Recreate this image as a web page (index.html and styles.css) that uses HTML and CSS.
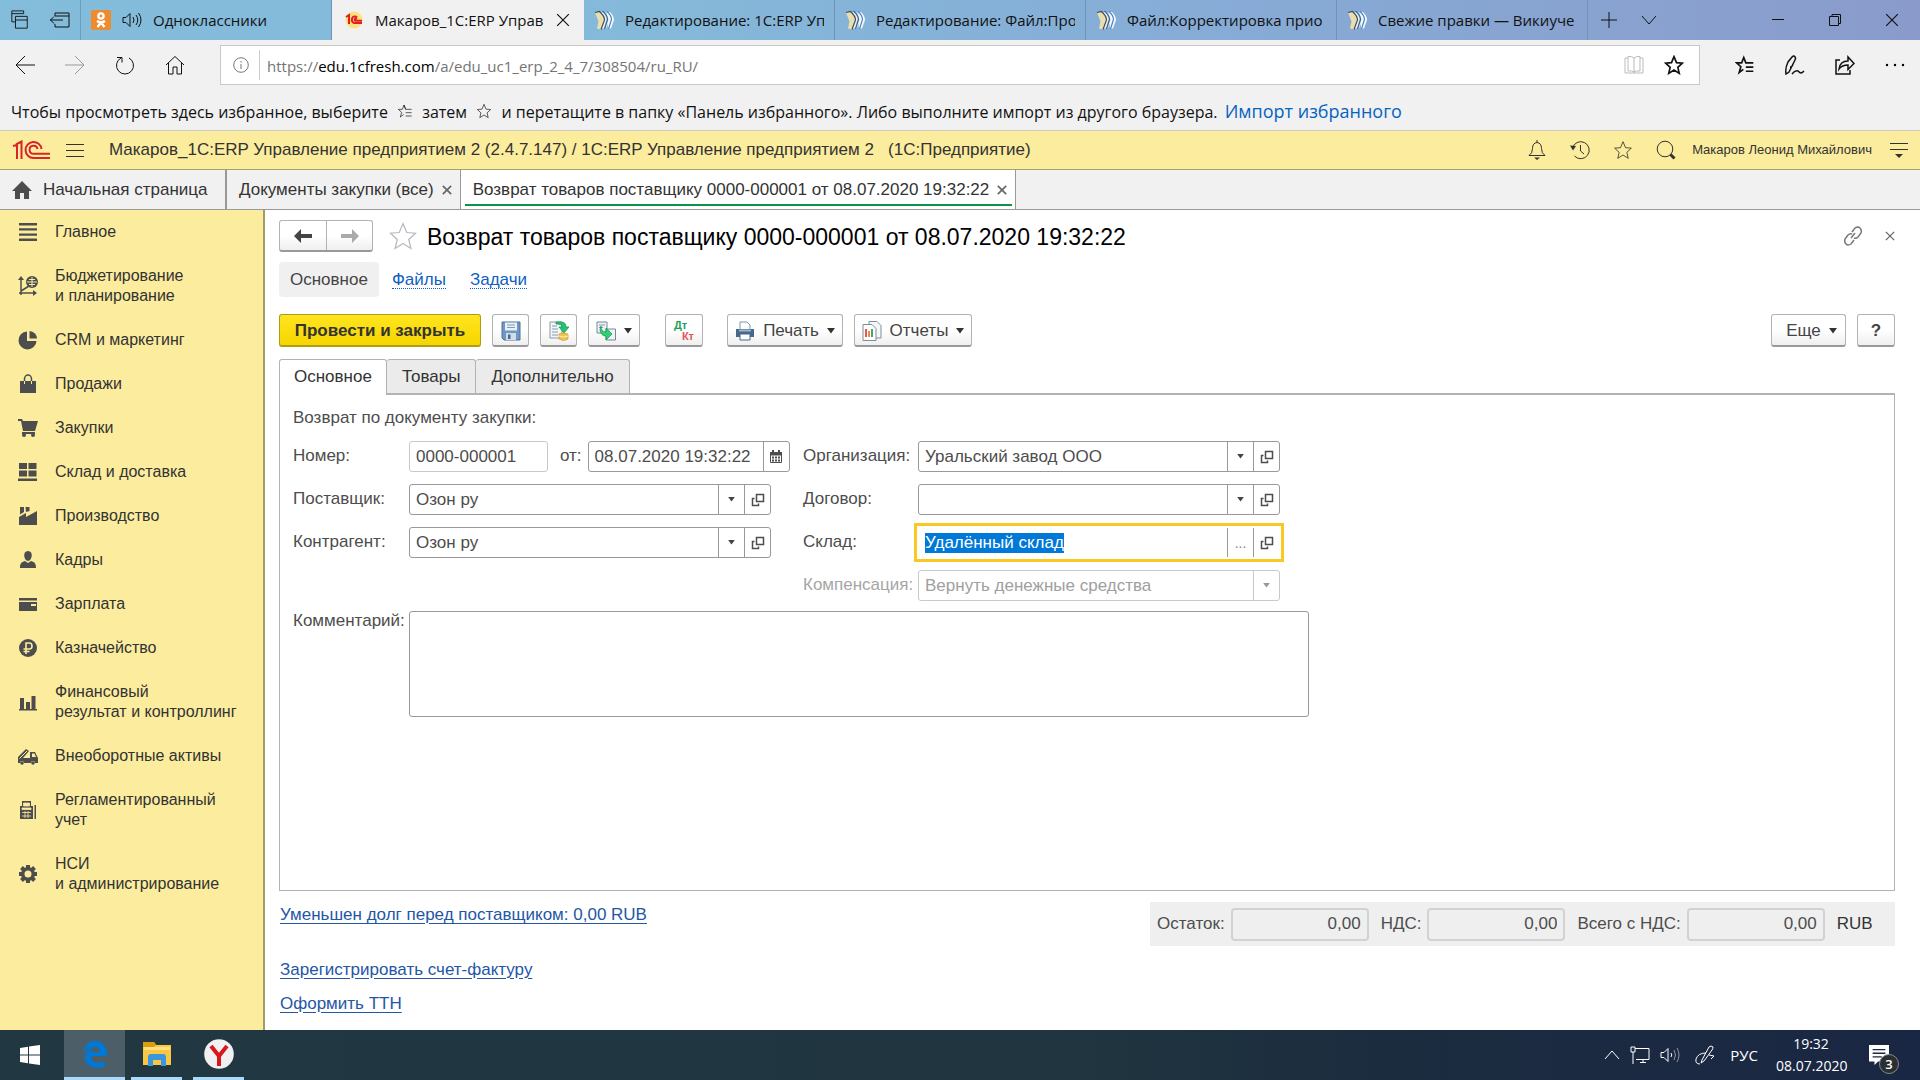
FILE: index.html
```html
<!DOCTYPE html>
<html lang="ru">
<head>
<meta charset="utf-8">
<title>Макаров_1С:ERP Управление предприятием 2</title>
<link rel="stylesheet" href="styles.css">
</head>
<body>
<svg class="defs" aria-hidden="true">
  <symbol id="star" viewBox="0 0 24 24"><path d="M12 2l3 7.2 7 .6-5.400 5 1.700 7.200L12 18l-6.300 4 1.700-7.200L2 9.800l7-.6z"/></symbol>
  <symbol id="books" viewBox="0 0 20 20"><path d="M12.500 2h3.500q4 4 4 8l-3 8.500h-3z" fill="#f4f8fc"/><path d="M13 1.500q4.500 4 4.500 8l-3 9.500" fill="none" stroke="#4b84c4" stroke-width="1.200"/><path d="M7.500 2h3.500q4 4 4 8l-3 8.500H8z" fill="#f2efe6"/><path d="M8.500 1q5 4.500 5 8.500l-3 9.500" fill="none" stroke="#356ba6" stroke-width="1.400"/><path d="M1 2.500L5.500 2q4.500 4.500 4.500 8l-3 9.500-4-1 1.500-7z" fill="#e9dfae"/><path d="M1 2.500L5.500 1.500q5 4.500 5 8.500L7 19.500" fill="none" stroke="#3f4d59" stroke-width="1.200"/></symbol>
  <symbol id="open" viewBox="0 0 14 14"><path d="M5.500 1.500h7v7h-7zM3.500 5.500h-2v7h6v-2" fill="none" stroke="#4d4d4d" stroke-width="1.500"/></symbol>
  <symbol id="arrow" viewBox="0 0 8 6"><path d="M0 0h8L4 5.500z"/></symbol>
  <symbol id="cross" viewBox="0 0 12 12"><path d="M1 1l10 10M11 1L1 11"/></symbol>
  <symbol id="favs" viewBox="0 0 24 24"><path d="M13 9.500L10.500 3 8 9.500H2l5 4.500-2 7 5-3.800M10.500 3l2.500 6.500h9M13 14.500h9M13 19.500h9"/></symbol>
</svg>

<header class="browser">
  <div class="tabs">
    <div class="tab-tools">
      <svg class="line i20" viewBox="0 0 20 22"><path d="M1 1h13v3H1zM1 4v9h4M5 7h13v4H5zM5 11v9h13v-9"/></svg>
      <svg class="line i20" viewBox="0 0 20 20"><path d="M5 6V3h14v14H5v-3M5 6h14M0 10h13M4 6.500L.5 10 4 13.500"/></svg>
    </div>
    <div class="tab">
      <svg class="i20" viewBox="0 0 20 20"><rect width="20" height="20" rx="2" fill="#ee8b2e"/><g fill="none" stroke="#fff" stroke-width="2.400"><circle cx="10" cy="6" r="2.600"/><path d="M6 11q4 2.600 8 0M10 12.500L6.500 17M10 12.500l3.500 4.500"/></g></svg>
      <svg class="line i20" viewBox="0 0 20 20"><path d="M1 7.500h3l4-4v13l-4-4H1zM11 7q2 3 0 6M14 5q3.500 5 0 10M16.500 3q5 7 0 14"/></svg>
      <span>Одноклассники</span>
    </div>
    <div class="tab active">
      <svg class="i20" viewBox="0 0 20 20"><circle cx="10" cy="10" r="8.500" fill="#fbe27c"/><path d="M2 7l3-2v9M13 7.500a3 3.300 0 1 0-1.500 5.500H18M12.500 9.500a1 1 0 1 0-1 1.300H18" fill="none" stroke="#e31e24" stroke-width="2"/></svg>
      <span>Макаров_1С:ERP Управ</span>
      <button aria-label="Закрыть вкладку"><svg class="line i14"><use href="#cross"/></svg></button>
    </div>
    <div class="tab"><svg class="i20"><use href="#books"/></svg><span>Редактирование: 1С:ERP Уп</span></div>
    <div class="tab"><svg class="i20"><use href="#books"/></svg><span>Редактирование: Файл:Про</span></div>
    <div class="tab"><svg class="i20"><use href="#books"/></svg><span>Файл:Корректировка прио</span></div>
    <div class="tab"><svg class="i20"><use href="#books"/></svg><span>Свежие правки — Викиуче</span></div>
    <div class="tab-more">
      <svg class="line i16" viewBox="0 0 16 16"><path d="M8 0v16M0 8h16"/></svg>
      <svg class="line i16" viewBox="0 0 16 16"><path d="M1 4l7 8 7-8"/></svg>
    </div>
    <div class="window-buttons">
      <button aria-label="Свернуть"><svg class="line i14" viewBox="0 0 14 14"><path d="M1 6.500h12"/></svg></button>
      <button aria-label="Развернуть"><svg class="line i14" viewBox="0 0 14 14"><path d="M1.500 3.500h9v9h-9zM4 3.500v-2h8.500v9h-2"/></svg></button>
      <button aria-label="Закрыть"><svg class="line i14"><use href="#cross"/></svg></button>
    </div>
  </div>

  <div class="address">
    <div class="nav">
      <svg class="line" viewBox="0 0 20 20"><path d="M20 10H1M10 1l-9 9 9 9"/></svg>
      <svg class="line dim" viewBox="0 0 20 20"><path d="M0 10h19M10 1l9 9-9 9"/></svg>
      <svg class="line" viewBox="0 0 20 20"><path d="M6 3a8.500 8.500 0 1 0 8 0M2 2.500h5v5"/></svg>
      <svg class="line" viewBox="0 0 20 20"><path d="M1 10l9-8.500 9 8.500M3.500 8v11h4.500v-7h4v7h4.500V8"/></svg>
    </div>
    <div class="url">
      <svg class="line i16 grey" viewBox="0 0 16 16"><circle cx="8" cy="8" r="7.300"/><path d="M8 7v5M8 4v1.500"/></svg>
      <i></i>
      <a href="#">https://<b>edu.1cfresh.com</b>/a/edu_uc1_erp_2_4_7/308504/ru_RU/</a>
      <svg class="line i20 pale" viewBox="0 0 20 20"><path d="M10 3v15M10 3Q8 1 4 1.500V16q4-.5 6 1 2-1.500 6-1V1.500Q12 1 10 3M4 3H1v15h18V3h-3"/></svg>
      <svg class="line i20 bold"><use href="#star"/></svg>
    </div>
    <div class="actions">
      <svg class="line bold"><use href="#favs"/></svg>
      <svg class="line medium" viewBox="0 0 20 20"><path d="M1 19q-1-6 2-12L7 2q2-2 3 0 1 1 0 3L4 17zM5 12q2 0 3-2M7 19q3-4 6-3 2 2 3 2t3-2"/></svg>
      <svg class="line medium" viewBox="0 0 20 20"><path d="M5 5H1v14h14v-4M4 14q1-8 9-8V2l6 6.500-6 6V10q-6 0-9 4z"/></svg>
      <svg viewBox="0 0 20 20"><circle cx="2" cy="10" r="1.200"/><circle cx="10" cy="10" r="1.200"/><circle cx="18" cy="10" r="1.200"/></svg>
    </div>
  </div>
  <p class="favbar">Чтобы просмотреть здесь избранное, выберите <svg class="line i16"><use href="#favs"/></svg> затем <svg class="line i16"><use href="#star"/></svg> и перетащите в папку «Панель избранного». Либо выполните импорт из другого браузера. <a href="#">Импорт избранного</a></p>
</header>

<div class="app-bar">
  <svg class="logo" viewBox="0 0 38 20"><g fill="none" stroke="#d8232a" stroke-width="2"><path d="M1 6l4-1M5 19V5M9.500 19V1.500L4 4.500"/><path d="M29.500 9a8 8 0 1 0-8 9H38M25.500 9a4 4 0 1 0-4 4.800H38"/></g></svg>
  <svg class="line menu" viewBox="0 0 18 14"><path d="M0 1.500h18M0 7.500h18M0 13.500h18"/></svg>
  <span class="app-name">Макаров_1С:ERP Управление предприятием 2 (2.4.7.147) / 1С:ERP Управление предприятием 2 &nbsp; (1С:Предприятие)</span>
  <div class="app-icons">
    <svg class="line" viewBox="0 0 20 20"><path d="M2 15.500q3.500-2 3.500-7Q5.500 3 10 2.500q4.500.500 4.500 6 0 5 3.500 7zM10 0v2.500"/><path d="M7 17.500h6l-3 2.500z" fill="#333" stroke="none"/></svg>
    <svg class="line" viewBox="0 0 20 20"><path d="M2.500 8a8.500 8.500 0 1 1 2 8M10.500 5v6l3.500 3"/><path d="M0 5.500l6 .5-3 4.500z" fill="#333" stroke="none"/></svg>
    <svg class="line"><use href="#star"/></svg>
    <svg class="line" viewBox="0 0 20 20"><circle cx="9" cy="9" r="7.800"/><path d="M14.500 14.500l4 4" stroke-width="3"/></svg>
  </div>
  <span class="user">Макаров Леонид Михайлович</span>
  <svg class="line menu" viewBox="0 0 18 18"><path d="M0 2.500h18M0 8.500h18"/><path d="M5 13h8l-4 4z" fill="#333" stroke="none"/></svg>
</div>

<nav class="app-tabs">
  <a href="#" class="home"><svg class="i20" viewBox="0 0 20 20"><path d="M10 1L0 11h3v8h5v-6h4v6h5v-8h3z"/></svg>Начальная страница</a>
  <a href="#" class="doc">Документы закупки (все)<svg class="x"><use href="#cross"/></svg></a>
  <a href="#" class="doc current">Возврат товаров поставщику 0000-000001 от 08.07.2020 19:32:22<svg class="x"><use href="#cross"/></svg></a>
</nav>

<div class="workspace">
  <nav class="sections">
    <a href="#"><svg viewBox="0 0 20 20"><path d="M1 1h18v2.400H1zM1 6.200h18v2.400H1zM1 11.400h18v2.400H1zM1 16.600h18V19H1z"/></svg>Главное</a>
    <a href="#"><svg viewBox="0 0 20 20"><path d="M3 2v17M1 17h17M3 15l8-5" fill="none" stroke="#4d4d4d" stroke-width="1.500"/><path d="M0 4l3-4 3 4zM15 14l4 3-4 3z"/><circle cx="14" cy="6" r="6"/><path d="M14 1v10M9 6h10M11 3.500h6M11 8.500h6" stroke="#fbec9e"/></svg>Бюджетирование<br>и планирование</a>
    <a href="#"><svg viewBox="0 0 20 20"><path d="M9 1.500V11h9.500A9 9 0 1 1 9 1.500z"/><path d="M11.500 1a8 8 0 0 1 7.500 7.500h-7.500z"/></svg>CRM и маркетинг</a>
    <a href="#"><svg viewBox="0 0 20 20"><path d="M2 7h16v12H2z"/><path d="M6.500 10V5a3.500 4 0 0 1 7 0v5" fill="none" stroke="#4d4d4d" stroke-width="1.500"/><path d="M6.500 7v3M13.500 7v3" stroke="#fbec9e"/></svg>Продажи</a>
    <a href="#"><svg viewBox="0 0 20 20"><path d="M0 1h4l1 2h15l-3 10H5L3 3H0z"/><path d="M4 14h13v2H4z"/><circle cx="6" cy="17" r="2"/><circle cx="15" cy="17" r="2"/></svg>Закупки</a>
    <a href="#"><svg viewBox="0 0 20 20"><path d="M1 1h8v6H1zM10.500 1h8v6h-8zM1 8.500h8v6H1zM10.500 8.500h8v6h-8zM0 16.500h19V19H0z"/></svg>Склад и доставка</a>
    <a href="#"><svg viewBox="0 0 20 20"><path d="M1 19v-8l7-4v4l11-6v14zM2 1h4v5l-4 2.500zM7.500 1h4v4L8 6z"/></svg>Производство</a>
    <a href="#"><svg viewBox="0 0 20 20"><path d="M10 1c6 0 4 10 0 10S4 1 10 1zM7 11l3 2 3-2c4 1 5 3 5 7H2c0-4 1-6 5-7z"/></svg>Кадры</a>
    <a href="#"><svg viewBox="0 0 20 20"><path d="M1 4h18v2.500H1z"/><path d="M1 8h18v9H1zM13 10v2h5v-2z" fill-rule="evenodd"/></svg>Зарплата</a>
    <a href="#"><svg viewBox="0 0 20 20"><circle cx="10" cy="10" r="9"/><path d="M8 16V5h3.500q2.500 0 2.500 3t-2.500 3H5.500M5.500 13.500h6" fill="none" stroke="#fbec9e" stroke-width="1.600"/></svg>Казначейство</a>
    <a href="#"><svg viewBox="0 0 20 20"><path d="M1 17h18v1.500H1zM2 6h4v11H2zM8 10h4v7H8zM13.500 4h4v13h-4z"/></svg>Финансовый<br>результат и контроллинг</a>
    <a href="#"><svg viewBox="0 0 20 20"><path d="M0 11L8 3l3 2-6 7h7V6h5l3 6v5h-3a2 2 0 0 0-4 0H6a2 2 0 0 0-4 0H0zM14 7.500V11h4l-1.500-3.500z" fill-rule="evenodd"/><path d="M1.500 12.500L9 5" stroke="#fbec9e"/><circle cx="4" cy="17" r="1.800"/><circle cx="15" cy="17" r="1.800"/></svg>Внеоборотные активы</a>
    <a href="#"><svg viewBox="0 0 20 20"><path d="M4 1h9v5H4zM2 6h13v13H2zM16.500 5H18v14h-1.500z"/><path d="M5.500 3h6v3h-6zM4 8h9v1.500H4zM4 12.500h9M4 16h9M7 11v7M10 11v7" fill="#fbec9e" stroke="#fbec9e" stroke-width=".8"/></svg>Регламентированный<br>учет</a>
    <a href="#"><svg viewBox="0 0 20 20"><path d="M10 1v18M1 10h18M3.500 3.500l13 13M16.500 3.500l-13 13" stroke="#4d4d4d" stroke-width="4"/><circle cx="10" cy="10" r="7"/><circle cx="10" cy="10" r="3.500" fill="#fbec9e"/></svg>НСИ<br>и администрирование</a>
  </nav>

  <main>
    <div class="title-row">
      <div class="history">
        <button aria-label="Назад"><svg class="i18" viewBox="0 0 18 14"><path d="M7 0v5h11v4H7v5L0 7z"/></svg></button>
        <button aria-label="Вперед" disabled><svg class="i18" viewBox="0 0 18 14"><path d="M11 0v5H0v4h11v5l7-7z"/></svg></button>
      </div>
      <svg class="line fav"><use href="#star"/></svg>
      <h1>Возврат товаров поставщику 0000-000001 от 08.07.2020 19:32:22</h1>
      <div class="title-tools">
        <svg class="line i20" viewBox="0 0 20 20"><path d="M8 12l4-5M9 6l3-4q3-2 5 0t1 5l-3 4q-2 2-4 1M11 14l-3 4q-3 2-5 0t-1-5l3-4q2-2 4-1" stroke-width="1.500"/></svg>
        <svg class="line x"><use href="#cross"/></svg>
      </div>
    </div>

    <nav class="subnav"><span>Основное</span><a href="#">Файлы</a><a href="#">Задачи</a></nav>

    <div class="toolbar">
      <button class="primary">Провести и закрыть</button>
      <button class="sq" aria-label="Записать"><svg class="i20" viewBox="0 0 20 20"><path d="M1 1h18v18H3l-2-2z" fill="#6f98c4" stroke="#4a7099"/><path d="M4 1.500h12v8H4z" fill="#e8f1f8"/><path d="M6 4h8M6 6.500h8" stroke="#7f9bb5"/><path d="M5 12h10v7H5z" fill="#d3dde6"/><path d="M7 13.500h2.500V18H7z" fill="#44688f"/></svg></button>
      <button class="sq" aria-label="Провести"><svg class="i20" viewBox="0 0 20 20"><path d="M1 1h12v16H1z" fill="#f4f7fa" stroke="#8799aa"/><path d="M3 5h5M3 8h6M3 11h6M3 14h6" stroke="#8799aa"/><path d="M7 1h5q5 0 5 5h3l-5 6-5-6h3q0-3-6-3z" fill="#26c274" stroke="#149150" stroke-width=".7"/><path d="M10 13q4.500-2 9 0v5q-4.500 3-9 0z" fill="#f0c34c" stroke="#cf9d27" stroke-width=".7"/><path d="M10 15q4.500 2 9 0" fill="none" stroke="#fff0b8"/></svg></button>
      <button class="drop" aria-label="Создать на основании"><svg class="i20" viewBox="0 0 20 20"><path d="M1 1h10v11H1z" fill="#eef2f5" stroke="#75899c"/><path d="M10 8h9.500v11H10z" fill="#eef2f5" stroke="#75899c"/><path d="M3 4h6M3 6.500h4" stroke="#8799aa"/><path d="M5 5q0 6 5 6V7l6 6-6 6v-4Q5 15 4 9z" fill="#33cf74" stroke="#149150" stroke-width=".7"/></svg><svg class="arrow"><use href="#arrow"/></svg></button>
      <button class="sq dtkt"><span>Дт</span><span>Кт</span></button>
      <button class="wide print"><svg class="i20" viewBox="0 0 20 20"><path d="M5 9V1h7l3 3v5" fill="#fff" stroke="#8294a5"/><path d="M1 8h18v8H1z" fill="#47688c"/><path d="M4 9.500h12" stroke="#9fb8d0" stroke-width="2"/><path d="M5 13h10v6H5z" fill="#fff" stroke="#47688c"/></svg>Печать<svg class="arrow"><use href="#arrow"/></svg></button>
      <button class="wide"><svg class="i20" viewBox="0 0 20 20"><path d="M7 .5h8l4 4V17H7z" fill="#f4f7f6" stroke="#7c8f9a"/><path d="M1 3.500h9l4 4v12H1z" fill="#fff" stroke="#7c8f9a"/><path d="M4 8v8" stroke="#e4574d" stroke-width="2"/><path d="M7 10v6" stroke="#e98a4d" stroke-width="2"/><path d="M10 8v8" stroke="#46a862" stroke-width="2"/></svg>Отчеты<svg class="arrow"><use href="#arrow"/></svg></button>
      <span class="spacer"></span>
      <button class="more">Еще<svg class="arrow"><use href="#arrow"/></svg></button>
      <button class="sq help">?</button>
    </div>

    <div class="page-tabs" role="tablist">
      <button role="tab" aria-selected="true">Основное</button><button role="tab">Товары</button><button role="tab">Дополнительно</button>
    </div>
    <form class="panel" onsubmit="return false">
      <p>Возврат по документу закупки:</p>
      <div class="grid">
        <label for="num">Номер:</label>
        <div class="pair">
          <div class="field faded num"><input id="num" value="0000-000001" readonly></div>
          <label for="date">от:</label>
          <div class="field date"><input id="date" value="08.07.2020 19:32:22"><button aria-label="Календарь"><svg class="i12" viewBox="0 0 12 13"><path d="M.5 2.500h11v10H.5z" fill="#fff" stroke="#4d4d4d"/><path d="M0 2h12v3.500H0z" fill="#4d4d4d"/><path d="M3 0v3M9 0v3" stroke="#4d4d4d" stroke-width="2"/><path d="M2 7.500h8M2 10.500h8" stroke="#4d4d4d" stroke-width="2" stroke-dasharray="2 1"/></svg></button></div>
        </div>
        <label for="org">Организация:</label>
        <div class="field"><input id="org" value="Уральский завод ООО"><button aria-label="Выбрать"><svg class="arrow"><use href="#arrow"/></svg></button><button aria-label="Открыть"><svg class="i14"><use href="#open"/></svg></button></div>

        <label for="sup">Поставщик:</label>
        <div class="field"><input id="sup" value="Озон ру"><button aria-label="Выбрать"><svg class="arrow"><use href="#arrow"/></svg></button><button aria-label="Открыть"><svg class="i14"><use href="#open"/></svg></button></div>
        <label for="contract">Договор:</label>
        <div class="field"><input id="contract"><button aria-label="Выбрать"><svg class="arrow"><use href="#arrow"/></svg></button><button aria-label="Открыть"><svg class="i14"><use href="#open"/></svg></button></div>

        <label for="party">Контрагент:</label>
        <div class="field"><input id="party" value="Озон ру"><button aria-label="Выбрать"><svg class="arrow"><use href="#arrow"/></svg></button><button aria-label="Открыть"><svg class="i14"><use href="#open"/></svg></button></div>
        <label for="store">Склад:</label>
        <div class="field focused"><input id="store" value="Удалённый склад"><button class="dots" aria-label="Показать все">...</button><button aria-label="Открыть"><svg class="i14"><use href="#open"/></svg></button></div>

        <label for="comp" class="off comp">Компенсация:</label>
        <div class="field faded"><select id="comp" disabled><option>Вернуть денежные средства</option></select><span class="select-arrow"><svg class="arrow"><use href="#arrow"/></svg></span></div>
      </div>
      <div class="comment">
        <label for="note">Комментарий:</label>
        <textarea id="note"></textarea>
      </div>
    </form>

    <footer>
      <div class="links">
        <a href="#">Уменьшен долг перед поставщиком: 0,00 RUB</a>
        <a href="#">Зарегистрировать счет-фактуру</a>
        <a href="#">Оформить ТТН</a>
      </div>
      <div class="totals">
        <label for="rest">Остаток:</label><input id="rest" value="0,00" readonly>
        <label for="vat">НДС:</label><input id="vat" value="0,00" readonly>
        <label for="total">Всего с НДС:</label><input id="total" value="0,00" readonly>
        <span>RUB</span>
      </div>
    </footer>
  </main>
</div>

<div class="taskbar">
  <button class="start" aria-label="Пуск"><svg class="i20" viewBox="0 0 20 20"><path d="M0 3l8-1.200v7.700H0zM9 1.600L20 0v9.500H9zM0 10.500h8v7.700L0 17zM9 10.500h11V20L9 18.400z" fill="#fff"/></svg></button>
  <button class="task edge" aria-label="Edge"><svg viewBox="0 0 26 28"><path d="M1 13Q3 1 13 1q11 0 12 13v2H9q0 7 7 7 4 0 7-2v5q-4 2-8 2Q3 27 3 17q0-6 6-9-5 0-8 5zM9 12h9q0-5-4.500-5T9 12z" fill="#0078d7" fill-rule="evenodd"/></svg></button>
  <button class="task" aria-label="Проводник"><svg viewBox="0 0 28 24"><path d="M0 0h11l2 3h15v20H0z" fill="#f9c646"/><path d="M0 0h11l2 3-2 2H0z" fill="#dc9c0c"/><path d="M1 5h26v3H1z" fill="#ffdf7e"/><path d="M5 24V15q0-3 3-3h12q3 0 3 3v9h-5v-6h-8v6z" fill="#3a96dd"/></svg></button>
  <button class="task" aria-label="Яндекс.Браузер"><svg class="ya" viewBox="0 0 30 30"><circle cx="15" cy="15" r="14.800" fill="#f0f0f0"/><path d="M7 7l8 10 8-10M15 16v11" fill="none" stroke="#d8161c" stroke-width="4"/></svg></button>
  <span class="spacer"></span>
  <div class="tray">
    <svg class="line i16" viewBox="0 0 16 16"><path d="M1 12l7-8 7 8"/></svg>
    <svg class="line i20" viewBox="0 0 20 20"><path d="M5 3.500h14v11H6M10 17.500h6M13 15v3M1 2h4v5H1zM3 7v12"/></svg>
    <svg class="line i20" viewBox="0 0 20 20"><path d="M1 7.500h3l4-4v13l-4-4H1zM11 8q1.500 2 0 4"/><path d="M14 5q3 5 0 10M17 3q4 7 0 14" opacity=".5"/></svg>
    <svg class="line i20 pen" viewBox="0 0 20 20"><path d="M7 15L14 2q2-2 4 0 0 2-1 3L9 16l-3 2zM11 8Q3 8 1 14q-1 5 4 5M14 10l5 1-3 3"/></svg>
    <span>РУС</span>
  </div>
  <time>19:32<br>08.07.2020</time>
  <div class="notices"><svg viewBox="0 0 22 24"><path d="M0 0h22v18H10l-4 4v-4H0z" fill="#fff"/><path d="M4 5h14M4 9h14M4 13h10" stroke="#1b2a43" stroke-width="1.500"/></svg><b>3</b></div>
</div>
<script>
  document.getElementById('store').focus();
  document.getElementById('store').select();
</script>
</body>
</html>
```
FILE: styles.css
```css
* { box-sizing: border-box; }
body {
  margin: 0;
  min-height: 100vh;
  display: flex;
  flex-direction: column;
  font: 17px/20px "Liberation Sans", Arial, sans-serif;
  color: #333;
  background: #fff;
}
button, input, select, textarea { font: inherit; color: inherit; margin: 0; }
button { display: flex; align-items: center; justify-content: center; padding: 0; border: 0; background: none; }
a { color: inherit; text-decoration: none; }
p, h1 { margin: 0; }
svg { flex: none; width: 20px; height: 20px; }
.defs { display: none; }
.line { fill: none; stroke: currentColor; }
.bold { stroke-width: 2; }
.medium { stroke-width: 1.5; }
.i12 { width: 12px; height: 13px; }
.i14 { width: 14px; height: 14px; }
.i16 { width: 16px; height: 16px; }
.i18 { width: 18px; height: 14px; }
.i20 { width: 20px; height: 20px; }
.arrow { width: 8px; height: 6px; fill: #333; }
.spacer { flex: 1; }

/* Browser window */
.browser, .taskbar { font-family: "Open Sans", "Noto Sans", sans-serif; }
.browser { background: #f1f1f1; color: #111; border-bottom: 1px solid #ccc; }
.tabs { display: flex; height: 40px; background: linear-gradient(90deg, #84bcdc, #84bad9 30%, #86add7 60%, #8a9bcb); }
.tab-tools { display: flex; align-items: center; gap: 20px; width: 81px; padding-left: 10px; border-right: 1px solid #6d9dbb; }
.tab { display: flex; align-items: center; gap: 11px; width: 251px; padding: 0 10px; border-right: 1px solid #7192b8; font-size: 15px; }
.tab span { flex: 1; overflow: hidden; white-space: nowrap; }
.tab.active { background: #f1f1f1; width: 252px; padding: 0 14px 0 12px; border: 0; }
.tab.active button { width: 14px; }
.tab-more { display: flex; align-items: center; gap: 24px; padding-left: 13px; }
.window-buttons { display: flex; margin-left: auto; }
.window-buttons button { width: 57px; }
.address { display: flex; align-items: center; height: 50px; }
.nav { display: flex; gap: 30px; width: 220px; padding-left: 15px; }
.dim { color: #999; }
.url { flex: 1; display: flex; align-items: center; height: 40px; padding: 0 15px 0 12px; border: 1px solid #c9c9c9; background: #fff; }
.url i { width: 1px; height: 30px; margin: 0 7px 0 10px; background: #ccc; }
.url a { flex: 1; color: #757575; font-size: 15px; line-height: 22px; padding-top: 2px; }
.url b { font-weight: 400; color: #000; }
.url svg:last-child { margin-left: 20px; }
.grey { color: #777; }
.pale { color: #bbb; }
.actions { display: flex; justify-content: space-between; width: 220px; padding: 0 15px 0 35px; }
.favbar { height: 40px; padding: 11px; line-height: 20px; font-size: 16px; white-space: nowrap; }
.favbar svg { vertical-align: -1px; margin: 0 5px; }
.favbar a { margin-left: 3px; color: #0563c1; font-size: 18px; }

/* Application header */
.app-bar { display: flex; align-items: center; height: 39px; padding: 0 12px; background: #fbec9e; border-bottom: 1px solid #a9a067; }
.logo { width: 38px; height: 20px; }
.menu { width: 18px; height: 18px; }
.logo + .menu { margin: 0 25px 0 16px; height: 14px; }
.app-icons { display: flex; gap: 23px; margin: 0 16px 0 auto; }
.user { font-size: 13px; margin-right: 18px; }
.app-tabs { display: flex; height: 40px; background: #f1f1f1; border-bottom: 1px solid #999; }
.app-tabs a { display: flex; align-items: center; white-space: nowrap; }
.home { gap: 11px; width: 227px; padding-left: 12px; border-right: 2px solid #999; }
.home svg { fill: #4d4d4d; }
.doc { gap: 8px; padding: 0 8px 0 12px; border-right: 1px solid #999; }
.x { width: 10px; height: 10px; stroke: #666; stroke-width: 2; }
.current { background: linear-gradient(#0b9546, #0b9546) 4px 34px / calc(100% - 7px) 2px no-repeat #fff; }

.workspace { flex: 1; display: flex; }
.sections { width: 265px; background: #fbec9e; border-right: 2px solid #a39a66; font-size: 16px; }
.sections a { display: flex; align-items: center; gap: 17px; padding: 12px 18px; line-height: 20px; }
.sections svg { fill: #4d4d4d; }

/* Document form */
main { flex: 1; display: flex; flex-direction: column; padding: 10px 25px 16px 14px; }
.title-row { display: flex; align-items: center; height: 32px; }
.history, .toolbar button { border: 1px solid #b3b3b3; border-bottom: 2px solid #999; border-radius: 3px; background: linear-gradient(#fff 50%, #efefef); }
.history { display: flex; height: 32px; }
.history button { width: 46px; }
.history button + button { border-left: 1px solid #b3b3b3; fill: #aaa; }
.history svg { fill: inherit; }
.history button:first-child { fill: #444; }
.fav { width: 30px; height: 30px; margin: 0 9px 0 15px; color: #b5bac0; }
h1 { padding-top: 2px; font-size: 23px; line-height: 28px; font-weight: 400; color: #000; }
.title-tools { display: flex; align-items: center; gap: 22px; margin-left: auto; color: #777; }
.title-tools .x { stroke-width: 1.5; }
.subnav { display: flex; align-items: center; height: 35px; margin: 10px 0 17px; }
.subnav span { padding: 8px 11px; line-height: 19px; background: #f0f0f0; border-radius: 4px; color: #444; }
.subnav a { margin-left: 13px; line-height: 17px; color: #0f5fc2; border-bottom: 1px dotted #0f5fc2; }
.subnav a + a { margin-left: 24px; }
.toolbar { display: flex; height: 33px; margin-bottom: 12px; color: #444; }
.toolbar button { margin-right: 11px; padding-top: 1px; }
.toolbar .primary { width: 202px; border-color: #b09d14; background: linear-gradient(#ffe51f, #f7d600); color: #333; font-weight: 700; }
.toolbar .sq { width: 37px; }
.toolbar .drop { width: 52px; gap: 8px; margin-right: 25px; }
.toolbar .dtkt { display: grid; grid-template-columns: 20px; align-content: center; width: 38px; margin-right: 24px; font-size: 11px; line-height: 11px; font-weight: 700; color: #1da15d; text-align: left; }
.dtkt span + span { color: #e8545a; text-align: right; }
.toolbar .wide { width: 118px; gap: 8px; }
.toolbar .print { width: 116px; }
.toolbar .more { width: 75px; gap: 8px; padding-left: 6px; }
.toolbar .help { width: 38px; margin: 0; font-weight: 700; }
.page-tabs { display: flex; height: 34px; position: relative; }
.page-tabs button { padding: 0 15px; border: 1px solid #b3b3b3; border-bottom: 0; border-left: 0; border-radius: 3px 3px 0 0; background: #ebebeb; }
.page-tabs button[aria-selected] { height: 36px; padding: 0 14px 2px; background: #fff; border-left: 1px solid #b3b3b3; }
.panel { flex: 1; padding: 13px; border: 1px solid #b3b3b3; border-top-width: 2px; color: #4d4d4d; }
.panel p { margin-bottom: 13px; }
.grid { display: grid; grid-template-columns: 116px 394px 115px 362px; row-gap: 12px; }
.grid label { line-height: 30px; }
.off { color: #a6a6a6; }
.comp { grid-column: 3; }
.pair { display: flex; }
.pair label { margin: 0 6px 0 12px; }
.field { display: flex; width: 362px; height: 31px; border: 1px solid #999; border-radius: 3px; background: #fff; }
.field input, .field select { flex: 1; min-width: 0; padding: 0 6px; border: 0; outline: 0; background: none; appearance: none; }
.field select { color: #a0a0a0; opacity: 1; }
.field button, .select-arrow { display: flex; align-items: center; justify-content: center; width: 26px; border-left: 1px solid #999; }
.field .arrow { width: 7px; height: 5px; fill: #444; }
.field .dots { color: #888; font-size: 14px; }
.faded, .faded .select-arrow { border-color: #c9c9c9; }
.faded .arrow { fill: #999; }
.num { width: 139px; }
.date { width: 202px; }
.focused { border-color: transparent; outline: 3px solid #f9c823; outline-offset: 1px; border-radius: 0; }
.focused ::selection { background: #0078d7; color: #fff; }
.comment { display: flex; margin-top: 10px; }
.comment label { width: 116px; white-space: nowrap; }
textarea { width: 900px; height: 106px; border: 1px solid #999; border-radius: 3px; resize: none; }
footer { display: flex; justify-content: space-between; align-items: flex-start; margin-top: 11px; }
.links { display: flex; flex-direction: column; padding: 3px 1px 0; }
.links a { color: #2456a6; text-decoration: underline; text-underline-offset: 3px; margin-bottom: 14px; }
.links a:first-child { margin-bottom: 35px; }
.links a:last-child { margin-bottom: 0; }
.totals { display: flex; align-items: center; width: 745px; height: 44px; padding: 0 7px; background: #efefef; color: #4d4d4d; }
.totals input { width: 138px; height: 33px; margin: 0 12px 0 6px; padding: 0 6px; border: 2px solid #d2d2d2; border-radius: 4px; background: none; text-align: right; }
.totals span { color: #333; }

/* Windows taskbar */
.taskbar { display: flex; height: 50px; color: #fff; background: linear-gradient(90deg, #213842, #20353f 55%, #1b2b3f 75%, #1a2744); }
.start { width: 60px; }
.task { width: 51px; margin-right: 11px; border-bottom: 3px solid #a9d9fb; }
.edge { width: 61px; margin: 0 6px 0 4px; background: #4c5f68; }
.task svg { width: 28px; height: 24px; }
.edge svg { width: 26px; height: 28px; }
.task .ya { width: 30px; height: 30px; }
.tray { display: flex; align-items: center; gap: 10px; font-size: 15px; }
.pen { margin: 0 5px; }
.taskbar time { width: 70px; margin: 3px 0 0 18px; font-size: 14px; line-height: 22px; text-align: center; white-space: nowrap; }
.notices { position: relative; width: 74px; padding: 15px 0 0 23px; }
.notices svg { width: 20px; height: 22px; }
.notices b { position: absolute; left: 33px; top: 24px; width: 20px; height: 20px; border: 1px solid #888; border-radius: 10px; background: #2b2f33; font-size: 13px; line-height: 18px; font-weight: 600; text-align: center; }
```
